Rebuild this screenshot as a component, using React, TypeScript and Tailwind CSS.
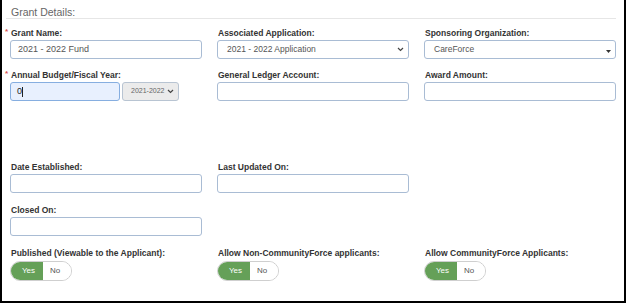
import React from "react";

const font = { fontFamily: '"Liberation Sans", Arial, sans-serif' };

function Label({ children, req }: { children: React.ReactNode; req?: boolean }) {
  return (
    <div className="relative h-[12px] flex items-center text-[8.5px] font-bold text-[#333] leading-none pl-px whitespace-nowrap">
      {req && <span className="absolute left-[-5px] top-[1px] text-[#d9534f] text-[8px]">*</span>}
      {children}
    </div>
  );
}

function Input({ value }: { value?: string }) {
  return (
    <div className="mt-px h-[19px] w-[192px] rounded-[3px] border border-[#a9bcd4] bg-white flex items-center px-[7px] text-[9px] text-[#555] whitespace-nowrap">
      {value}
    </div>
  );
}

function Chevron() {
  return (
    <svg width="7" height="5" viewBox="0 0 7 5" className="shrink-0">
      <path d="M1 1 L3.5 3.5 L6 1" fill="none" stroke="#444" strokeWidth="1.2" />
    </svg>
  );
}

function Select({ value, caret }: { value: string; caret?: boolean }) {
  return (
    <div className="mt-px h-[19px] w-[192px] rounded-[3px] border border-[#a9bcd4] bg-white flex items-center justify-between pl-[9px] pr-[4px] text-[8.5px] text-[#555] whitespace-nowrap">
      <span>{value}</span>
      {caret ? (
        <svg width="5" height="4" viewBox="0 0 5 4" className="mt-[5px] shrink-0">
          <path d="M0 0 L5 0 L2.5 3 Z" fill="#333" />
        </svg>
      ) : (
        <Chevron />
      )}
    </div>
  );
}

function Toggle() {
  return (
    <div className="mt-[2px] flex h-[20px] w-[62px] rounded-full border border-[#cfcfcf] overflow-hidden text-[8px]">
      <div className="w-[32px] bg-[#65a058] text-white flex items-center justify-center pl-[3px]">Yes</div>
      <div className="flex-1 bg-white text-[#555] flex items-center justify-center pr-[4px]">No</div>
    </div>
  );
}

export default function App() {
  return (
    <div style={font} className="w-[626px] h-[303px] bg-white border-l-2 border-r-2 border-b-2 border-black relative overflow-hidden">
      <div className="pl-[4px] pr-[8px]">
        <div className="h-[19px] border-b border-[#e6e6e6] flex items-center pl-[5px] pt-[7px] text-[10.5px] text-[#666]">
          Grant Details:
        </div>
      </div>
      <div className="pl-[8px] pt-[8px]">
        <div className="grid grid-cols-[192px_192px_192px] gap-x-[15px]">
          <div>
            <Label req>Grant Name:</Label>
            <Input value="2021 - 2022 Fund" />
          </div>
          <div>
            <Label>Associated Application:</Label>
            <Select value="2021 - 2022 Application" />
          </div>
          <div>
            <Label>Sponsoring Organization:</Label>
            <Select value="CareForce" caret />
          </div>
        </div>
        <div className="grid grid-cols-[192px_192px_192px] gap-x-[15px] mt-[10px]">
          <div>
            <Label req>Annual Budget/Fiscal Year:</Label>
            <div className="mt-px flex gap-[2px]">
              <div className="h-[19px] w-[110px] rounded-[3px] border border-[#86aee0] bg-[#e8f0fe] flex items-center px-[6px] text-[9px] text-[#222]">
                0<span className="inline-block w-px h-[10px] bg-[#222]" />
              </div>
              <div className="h-[19px] w-[57px] rounded-[3px] border border-[#b8c4d2] bg-[#ebebeb] flex items-center justify-between pl-[8px] pr-[4px] text-[7px] text-[#666] whitespace-nowrap">
                <span>2021-2022</span>
                <Chevron />
              </div>
            </div>
          </div>
          <div>
            <Label>General Ledger Account:</Label>
            <Input />
          </div>
          <div>
            <Label>Award Amount:</Label>
            <Input />
          </div>
        </div>
        <div className="grid grid-cols-[192px_192px_192px] gap-x-[15px] mt-[60px]">
          <div>
            <Label>Date Established:</Label>
            <Input />
          </div>
          <div>
            <Label>Last Updated On:</Label>
            <Input />
          </div>
        </div>
        <div className="grid grid-cols-[192px_192px_192px] gap-x-[15px] mt-[11px]">
          <div>
            <Label>Closed On:</Label>
            <Input />
          </div>
        </div>
        <div className="grid grid-cols-[192px_192px_192px] gap-x-[15px] mt-[11px]">
          <div>
            <Label>Published (Viewable to the Applicant):</Label>
            <Toggle />
          </div>
          <div>
            <Label>Allow Non-CommunityForce applicants:</Label>
            <Toggle />
          </div>
          <div>
            <Label>Allow CommunityForce Applicants:</Label>
            <Toggle />
          </div>
        </div>
      </div>
    </div>
  );
}
